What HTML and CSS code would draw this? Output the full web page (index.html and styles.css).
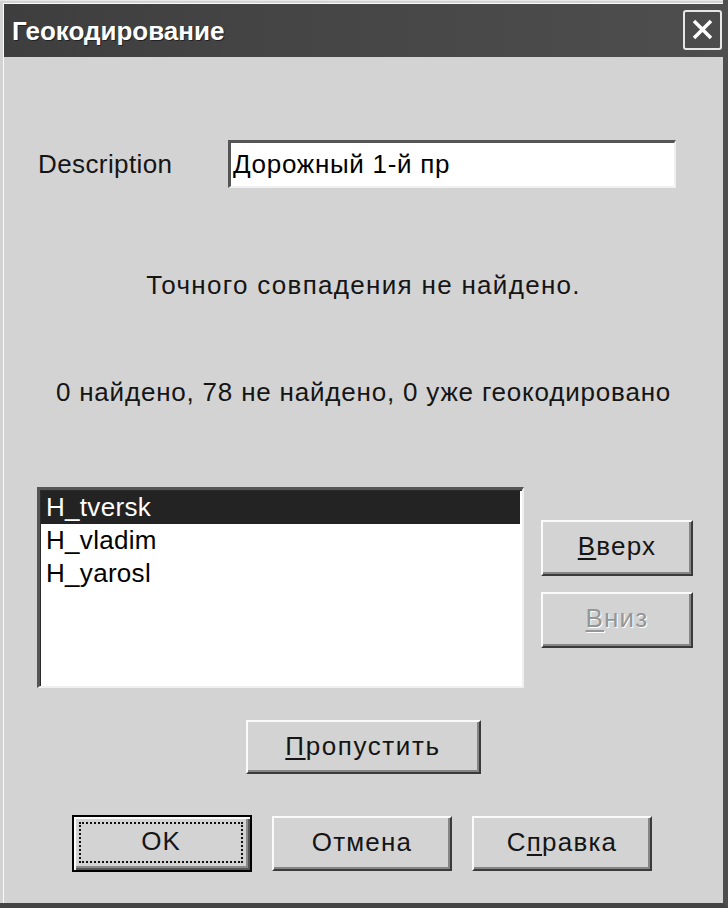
FILE: index.html
```html
<!DOCTYPE html>
<html lang="ru">
<head>
<meta charset="utf-8">
<title>Геокодирование</title>
<link rel="stylesheet" href="styles.css">
</head>
<body>
<div class="window">
  <div class="inner">
    <div class="titlebar">
      <span class="title">Геокодирование</span>
      <span class="close">
        <svg width="23" height="23" viewBox="0 0 23 23"><path d="M3 3 L20 20 M20 3 L3 20" stroke="#fff" stroke-width="3.5" fill="none"/></svg>
      </span>
    </div>
    <div class="content">
      <div class="desc-row">
        <span class="label">Description</span>
        <div class="field">Дорожный 1-й пр</div>
      </div>
      <div class="msg msg1">Точного совпадения не найдено.</div>
      <div class="msg msg2">0 найдено, 78 не найдено, 0 уже геокодировано</div>
      <div class="list-row">
        <div class="listbox">
          <div class="item selected">H_tversk</div>
          <div class="item">H_vladim</div>
          <div class="item">H_yarosl</div>
        </div>
        <div class="side">
          <div class="btn side-btn"><span><u>В</u>верх</span></div>
          <div class="btn side-btn disabled"><span><u>В</u>низ</span></div>
        </div>
      </div>
      <div class="skip-row">
        <div class="btn skip"><span><u>П</u>ропустить</span></div>
      </div>
      <div class="bottom-row">
        <div class="btn default"><span class="focus">OK</span></div>
        <div class="btn bottom"><span>Отмена</span></div>
        <div class="btn bottom"><span>С<u>п</u>равка</span></div>
      </div>
    </div>
  </div>
</div>
</body>
</html>
```
FILE: styles.css
```css
html, body {
  margin: 0;
  padding: 0;
}
body {
  width: 728px;
  height: 908px;
  overflow: hidden;
  background: #d3d3d3;
  font-family: "Liberation Sans", Arial, sans-serif;
  font-size: 26px;
  letter-spacing: 1px;
  color: #151515;
}
.window {
  box-sizing: border-box;
  width: 728px;
  height: 908px;
  padding-left: 3px;
  padding-top: 3px;
  background: #d3d3d3;
  border-right: 5px solid #4e4e4e;
  border-bottom: 5px solid #444;
  box-shadow: inset 0 1px 0 #e8e8e8;
}
.inner {
  height: 100%;
  border-left: 1px solid #fafafa;
  border-top: 1px solid #fafafa;
  box-sizing: border-box;
}
.titlebar {
  height: 53px;
  display: flex;
  align-items: center;
  justify-content: space-between;
  padding: 2px 0 0 8px;
  box-sizing: border-box;
  background: linear-gradient(to right, #3e3e3e 0%, #454545 40%, #4e4e4e 100%);
}
.title {
  color: #fff;
  font-weight: bold;
  font-size: 26px;
  letter-spacing: 0;
  text-shadow: 1px 1px 0 #222;
}
.close {
  width: 39px;
  height: 40px;
  box-sizing: border-box;
  margin-right: 1px;
  margin-top: -4px;
  border: 2px solid #e6e6e6;
  border-radius: 3px;
  background: #4c4c4c;
  display: flex;
  align-items: center;
  justify-content: center;
}
.content {
  display: flex;
  flex-direction: column;
}
.desc-row {
  display: flex;
  align-items: center;
  margin-top: 83px;
  margin-left: 34px;
  height: 48px;
}
.label {
  width: 190px;
  letter-spacing: 0.4px;
}
.field {
  box-sizing: border-box;
  width: 448px;
  height: 48px;
  background: #fff;
  border-top: 3px solid #555;
  border-left: 3px solid #555;
  border-right: 2px solid #f0f0f0;
  border-bottom: 2px solid #f0f0f0;
  padding-left: 2px;
  display: flex;
  align-items: center;
  color: #000;
  letter-spacing: 0.7px;
}
.msg {
  text-align: center;
  line-height: 30px;
  height: 30px;
}
.msg1 {
  margin-top: 82px;
  letter-spacing: 1.3px;
}
.msg2 {
  margin-top: 77px;
  letter-spacing: 0.8px;
}
.list-row {
  display: flex;
  margin-top: 80px;
  margin-left: 33px;
}
.listbox {
  box-sizing: border-box;
  width: 487px;
  height: 201px;
  background: #fff;
  border-top: 3px solid #555;
  border-left: 3px solid #555;
  border-right: 2px solid #f0f0f0;
  border-bottom: 2px solid #f0f0f0;
  box-shadow: inset 1px 1px 0 #2a2a2a;
  padding: 1px 2px 0 1px;
  color: #000;
}
.item {
  height: 33px;
  line-height: 33px;
  padding-left: 5px;
  letter-spacing: 0.3px;
}
.item.selected {
  background: #232323;
  color: #fff;
}
.side {
  display: flex;
  flex-direction: column;
  gap: 16px;
  margin-left: 17px;
  padding-top: 33px;
}
.btn {
  box-sizing: border-box;
  background: #d3d3d3;
  border-top: 2px solid #fbfbfb;
  border-left: 2px solid #fbfbfb;
  border-right: 2px solid #3a3a3a;
  border-bottom: 2px solid #3a3a3a;
  box-shadow: inset -2px -2px 0 #858585;
  display: flex;
  align-items: center;
  justify-content: center;
  color: #151515;
}
.side-btn {
  width: 152px;
  height: 56px;
  padding-bottom: 4px;
  letter-spacing: 1.2px;
}
.disabled {
  color: #969696;
  text-shadow: 1px 1px 0 #fff;
}
.skip-row {
  display: flex;
  justify-content: center;
  margin-top: 32px;
  padding-right: 1px;
}
.skip {
  width: 235px;
  height: 54px;
  padding-bottom: 2px;
  letter-spacing: 1.6px;
}
.bottom-row {
  display: flex;
  align-items: center;
  gap: 20px;
  margin-top: 41px;
  margin-left: 68px;
}
.bottom {
  width: 180px;
  height: 55px;
  padding-bottom: 2px;
  letter-spacing: 1.2px;
}
.default {
  width: 180px;
  height: 57px;
  border: 2px solid #000;
  box-shadow: inset 2px 2px 0 #fbfbfb, inset -2px -2px 0 #555, inset -4px -4px 0 #8a8a8a;
  padding: 5px 7px 7px 5px;
}
.focus {
  flex: 1;
  align-self: stretch;
  border: 2px dotted #111;
  display: flex;
  align-items: center;
  justify-content: center;
  padding-bottom: 2px;
}
u {
  text-decoration-thickness: 2px;
  text-underline-offset: 3px;
}
```
